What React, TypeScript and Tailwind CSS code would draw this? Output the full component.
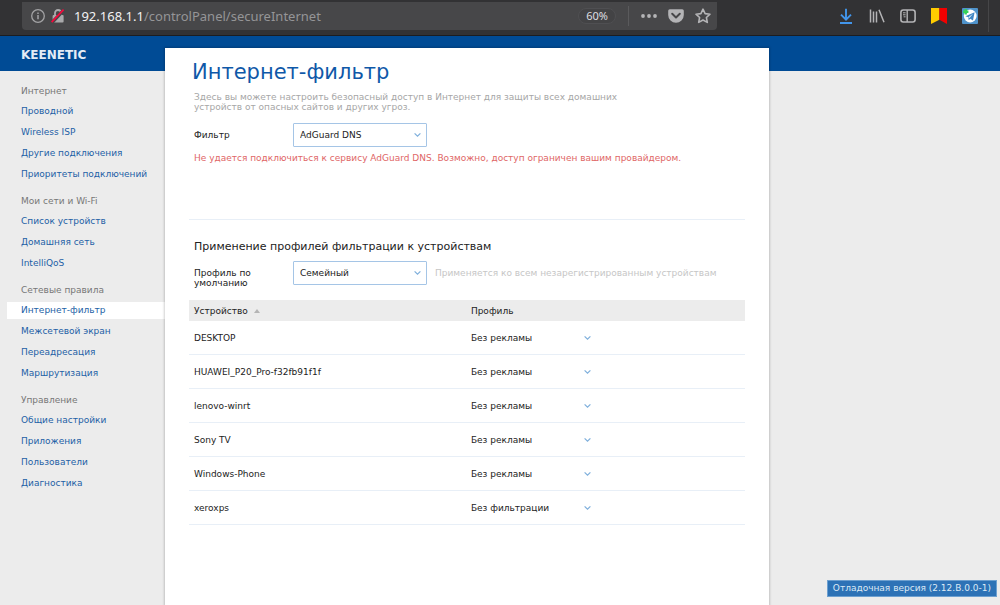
import React from "react";

const groups = [
  { title: "Интернет", items: ["Проводной", "Wireless ISP", "Другие подключения", "Приоритеты подключений"] },
  { title: "Мои сети и Wi-Fi", items: ["Список устройств", "Домашняя сеть", "IntelliQoS"] },
  { title: "Сетевые правила", items: ["Интернет-фильтр", "Межсетевой экран", "Переадресация", "Маршрутизация"] },
  { title: "Управление", items: ["Общие настройки", "Приложения", "Пользователи", "Диагностика"] },
];

const devices = [
  { name: "DESKTOP", profile: "Без рекламы" },
  { name: "HUAWEI_P20_Pro-f32fb91f1f", profile: "Без рекламы" },
  { name: "lenovo-winrt", profile: "Без рекламы" },
  { name: "Sony TV", profile: "Без рекламы" },
  { name: "Windows-Phone", profile: "Без рекламы" },
  { name: "xeroxps", profile: "Без фильтрации" },
];

const profiles = ["Без рекламы", "Семейный", "Без фильтрации"];

function Chevron() {
  return (
    <svg
      className="pointer-events-none absolute top-1/2 right-1.5 -translate-y-1/2"
      width="7"
      height="5"
      viewBox="0 0 7 5"
      fill="none"
      stroke="#7fafdc"
      strokeWidth="1.2"
      aria-hidden="true"
    >
      <path d="M0.6 0.8 3.5 3.7 6.4 0.8" />
    </svg>
  );
}

function BrowserBar() {
  return (
    <div className="flex h-9 items-start justify-between border-b border-[#1c1d20] bg-[#323234] pl-[22px]">
      <div className="mt-0.5 flex h-7 w-[72%] max-w-[695px] items-center rounded-b-sm bg-[#474749] pr-1.5 pl-2">
        <button aria-label="Сведения о сайте" className="mr-1">
          <svg width="16" height="16" viewBox="0 0 16 16" fill="none" stroke="#a3a3a5" strokeWidth="1.3">
            <circle cx="8" cy="8" r="6.3" />
            <path d="M8 7v4.2M8 4.4v1.5" strokeWidth="1.5" />
          </svg>
        </button>
        <button aria-label="Незащищённое соединение" className="mr-2">
          <svg width="16" height="16" viewBox="0 0 16 16" fill="none">
            <path d="M5 7V5a3 3 0 0 1 6 0v2" stroke="#a9a9ab" strokeWidth="1.8" />
            <rect x="2.6" y="7" width="11" height="7.4" rx="1" fill="#a9a9ab" />
            <path d="M2.2 14.4 14 1.8" stroke="#474749" strokeWidth="3.4" />
            <path d="M1.6 14.2 13.6 1.6" stroke="#f5083c" strokeWidth="1.7" />
          </svg>
        </button>
        <div className="flex-1 font-['Noto_Sans',sans-serif] text-[13px] text-[#959597]">
          <span className="text-[#f2f2f3]">192.168.1.1</span>/controlPanel/secureInternet
        </div>
        <button className="h-4 rounded-full border border-[#4f4f52] bg-[#434345] px-[7px] font-['Noto_Sans',sans-serif] text-[11px] leading-[14px] text-[#dedee0]">
          60%
        </button>
        <span className="mx-3 h-5 w-px bg-[#5a5a5c]" />
        <div className="flex items-center gap-[11px]">
          <button aria-label="Действия на странице">
            <svg width="16" height="16" viewBox="0 0 16 16" fill="#b4b4b6">
              <circle cx="2" cy="8" r="1.9" />
              <circle cx="8" cy="8" r="1.9" />
              <circle cx="14" cy="8" r="1.9" />
            </svg>
          </button>
          <button aria-label="Сохранить в Pocket">
            <svg width="16" height="16" viewBox="0 0 16 16" fill="none">
              <path d="M1.8 1.2h12.4A1.6 1.6 0 0 1 15.8 2.8V7a7.8 7.8 0 0 1-15.6 0V2.8A1.6 1.6 0 0 1 1.8 1.2Z" fill="#b4b4b6" />
              <path d="M4.2 5.8 8 9.4l3.8-3.6" stroke="#474749" strokeWidth="2" strokeLinecap="round" strokeLinejoin="round" />
            </svg>
          </button>
          <button aria-label="Добавить в закладки">
            <svg width="16" height="16" viewBox="0 0 16 16" fill="none" stroke="#b4b4b6" strokeWidth="1.6" strokeLinejoin="round">
              <path d="m8 1.2 2.1 4.4 4.9.6-3.6 3.3.9 4.9L8 12l-4.3 2.4.9-4.9L1 6.2l4.9-.6Z" />
            </svg>
          </button>
        </div>
      </div>
      <div className="flex h-8 items-center">
        <div className="mr-[10px] flex items-center gap-[15px]">
          <button aria-label="Загрузки">
            <svg width="16" height="16" viewBox="0 0 16 16" fill="none" stroke="#4295ea" strokeWidth="1.9">
              <path d="M8 .8v10.4M3 6.6l5 5 5-5M2 15h12" />
            </svg>
          </button>
          <button aria-label="Библиотека">
            <svg width="16" height="16" viewBox="0 0 16 16" fill="none" stroke="#b4b4b6" strokeWidth="1.5">
              <path d="M1.5 1.5v13M4.5 3.5v11M7.5 3.5v11M10 1.8l5 12.4" />
            </svg>
          </button>
          <button aria-label="Боковые панели">
            <svg width="16" height="16" viewBox="0 0 16 16" fill="none" stroke="#b4b4b6">
              <rect x=".9" y="2" width="14.2" height="12" rx="2.4" strokeWidth="1.6" />
              <path d="M7.2 2v12" strokeWidth="1.4" />
              <path d="M3 4.8h2.6M3 6.8h2.6M3.6 8.8h2" strokeWidth="1" />
            </svg>
          </button>
          <button aria-label="Закладки">
            <svg width="16" height="16" viewBox="0 0 16 16">
              <path d="M0 0h8.4v11.8L0 16Z" fill="#ffcc00" />
              <path d="M8.4 0H16v16l-7.6-4.2Z" fill="#f20000" />
            </svg>
          </button>
          <button aria-label="Telegram">
            <svg width="16" height="16" viewBox="0 0 16 16">
              <rect width="16" height="16" rx="1" fill="#4f93cb" />
              <circle cx="8.2" cy="8" r="6.4" fill="#fff" />
              <path d="m3.4 8.2 9.2-4-1.6 8.4-2.8-1.9-1.5 1.5-.4-2.9Z" fill="#4187c4" />
              <path d="m6.4 9.2 4.6-3.5-3.7 4.3Z" fill="#fff" />
              <path d="M3.7 1v5.4M1 3.7h5.4" stroke="#35d35a" strokeWidth="2.4" />
            </svg>
          </button>
        </div>
        <span className="mr-[11px] h-8 w-px bg-[#464648]" />
      </div>
    </div>
  );
}

function BoxSelect({ id, value, options }: { id: string; value: string; options: string[] }) {
  return (
    <div className="relative w-[134px]">
      <select
        id={id}
        defaultValue={value}
        className="block h-6 w-full appearance-none rounded-[1px] border border-[#a5c5e6] bg-white pr-4 pl-1.5 text-[#222]"
      >
        {options.map((o) => (
          <option key={o}>{o}</option>
        ))}
      </select>
      <Chevron />
    </div>
  );
}

export default function App() {
  return (
    <div className="flex min-h-screen flex-col bg-[#ececec] font-['DejaVu_Sans',sans-serif] text-[9px] leading-[10px] text-[#222]">
      <BrowserBar />
      <header className="flex h-[35px] items-center bg-[#004b95] pl-[21px]">
        <a href="#home" className="pt-0.5 text-[12px] font-bold text-[#e3ecf5]">
          KEENETIC
        </a>
      </header>
      <div className="flex flex-1">
        <nav className="w-[165px] shrink-0 pt-2.5">
          {groups.map((g) => (
            <section key={g.title} className="mb-1.5">
              <h2 className="pl-[21px] leading-5 text-[#777]">{g.title}</h2>
              <ul>
                {g.items.map((item) => (
                  <li key={item} className="py-0.5">
                    <a
                      href="#section"
                      className={
                        item === "Интернет-фильтр"
                          ? "ml-[7px] block bg-white pl-3.5 leading-[17px] text-[#1d5fa6]"
                          : "ml-[7px] block pl-3.5 leading-[17px] text-[#1d5fa6]"
                      }
                    >
                      {item}
                    </a>
                  </li>
                ))}
              </ul>
            </section>
          ))}
        </nav>
        <main className="-mt-[23px] max-w-[604px] flex-1 bg-white pr-6 pb-6 pl-6 shadow-[0_0_2px_1px_rgba(0,0,0,0.18)]">
          <h1 className="pt-2.5 pl-[3px] text-[21px] leading-7 text-[#0f58a8]">Интернет-фильтр</h1>
          <p className="mt-1.5 max-w-[470px] pl-[5px] text-[#a6a6a6]">
            Здесь вы можете настроить безопасный доступ в Интернет для защиты всех домашних устройств от опасных сайтов и
            других угроз.
          </p>
          <div className="mt-[11px] flex items-center pl-[5px]">
            <label htmlFor="filter" className="w-[99px]">
              Фильтр
            </label>
            <BoxSelect id="filter" value="AdGuard DNS" options={["AdGuard DNS", "SkyDNS", "Яндекс.DNS"]} />
          </div>
          <p className="mt-1.5 pl-[5px] text-[#e06666]">
            Не удается подключиться к сервису AdGuard DNS. Возможно, доступ ограничен вашим провайдером.
          </p>
          <section className="mt-14 border-t border-[#e8eff7] pt-5">
            <h2 className="pl-[5px] text-[11px] leading-[14px]">Применение профилей фильтрации к устройствам</h2>
            <div className="mt-[7px] flex items-start pl-[5px]">
              <label htmlFor="default-profile" className="w-[99px] pt-[7px] pr-8">
                Профиль по умолчанию
              </label>
              <BoxSelect id="default-profile" value="Семейный" options={profiles} />
              <p className="pt-[7px] pl-2 text-[#c6c6c6]">Применяется ко всем незарегистрированным устройствам</p>
            </div>
            <table className="mt-3 w-full table-fixed border-separate border-spacing-0 text-left">
              <thead>
                <tr className="h-[21px] bg-[#ececec]">
                  <th className="w-[50.7%] pl-[5px] font-normal">
                    <button className="flex items-center gap-1.5">
                      Устройство
                      <svg width="6" height="4" viewBox="0 0 6 4" fill="#b5b5b5" aria-hidden="true">
                        <path d="M0 4 3 0l3 4Z" />
                      </svg>
                    </button>
                  </th>
                  <th className="font-normal">Профиль</th>
                </tr>
              </thead>
              <tbody>
                {devices.map((d) => (
                  <tr key={d.name} className="h-[34px]">
                    <td className="border-b border-[#e8eff7] pl-[5px]">{d.name}</td>
                    <td className="border-b border-[#e8eff7]">
                      <div className="relative w-[126px]">
                        <select
                          aria-label={d.name}
                          defaultValue={d.profile}
                          className="block h-5 w-full appearance-none bg-transparent"
                        >
                          {profiles.map((p) => (
                            <option key={p}>{p}</option>
                          ))}
                        </select>
                        <Chevron />
                      </div>
                    </td>
                  </tr>
                ))}
              </tbody>
            </table>
          </section>
        </main>
      </div>
      <div className="fixed right-[3px] bottom-2 border border-[#6ea0d0] bg-[#2d72b6] px-[5px] text-[9px] leading-[15px] text-[#dce9f5]">
        Отладочная версия (2.12.B.0.0-1)
      </div>
    </div>
  );
}
